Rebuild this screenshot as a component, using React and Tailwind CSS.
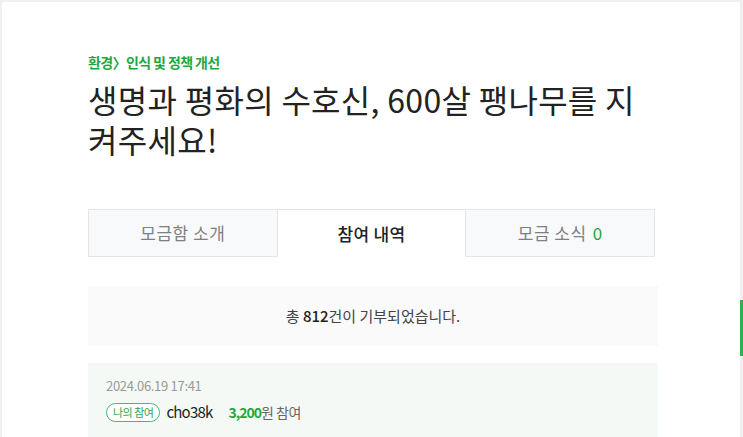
import React from 'react';

const font = { fontFamily: '"Noto Sans CJK KR", "Noto Sans", sans-serif' };

const tabs = [
  { label: '모금함 소개', active: false },
  { label: '참여 내역', active: true },
  { label: '모금 소식', active: false, count: 0 },
];

const App = () => {
  return (
    <div className="relative w-[743px] h-[437px] overflow-hidden bg-white" style={font}>
      <div className="absolute inset-0 border-l-[2px] border-t-[2px] border-r-[3px] border-[#f0f0f0] pointer-events-none" />
      {/* side indicator */}
      <div className="absolute right-0 top-[300px] w-[3px] h-[56px] bg-[#2bb24c]" />

      <div className="pl-[88px] pr-[88px] pt-[51px]">
        <p className="text-[14px] font-bold text-[#1fa83e] tracking-[-0.6px] leading-[22px]">
          환경〉인식 및 정책 개선
        </p>
        <h1 className="mt-[6px] text-[32px] leading-[40px] text-[#222] tracking-[0.3px]">
          생명과 평화의 수호신, 600살 팽나무를 지<br />켜주세요!
        </h1>

        <div className="mt-[50px] flex w-[567px] h-[48px]">
          {tabs.map((t, i) => (
            <div
              key={i}
              className={
                t.active
                  ? 'flex-1 flex items-center justify-center bg-white border-t border-[#e5e5e5] text-[17px] text-[#222] font-medium tracking-[0.3px]'
                  : 'flex-1 flex items-center justify-center bg-[#f8f9fa] border border-[#e5e5e5] text-[17px] text-[#808080] tracking-[0.5px]'
              }
            >
              {t.label}
              {t.count !== undefined && <span className="ml-[6px] text-[#1fa83e]">{t.count}</span>}
            </div>
          ))}
        </div>

        <div className="mt-[29px] w-[570px] h-[60px] bg-[#fafafa] flex items-center justify-center text-[15px] text-[#444] tracking-[0px]">
          총&nbsp;<span className="font-medium text-[#222]">812</span>건이 기부되었습니다.
        </div>

        <div className="mt-[17px] w-[570px] h-[90px] bg-[#f4f9f5] pl-[18px] pt-[14px]">
          <p className="text-[13px] text-[#999] tracking-[-0.3px] leading-[18px]">2024.06.19 17:41</p>
          <div className="mt-[6px] flex items-center">
            <span className="inline-flex items-center h-[19px] px-[6px] rounded-full border border-[#4cb868] text-[11px] text-[#2aa84a] bg-white tracking-[-0.5px] leading-none">
              나의 참여
            </span>
            <span className="ml-[6px] text-[15px] text-[#222] tracking-[-0.8px]">cho38k</span>
            <span className="ml-[16px] text-[14px] font-bold text-[#1fa83e] tracking-[-1px]">3,200</span>
            <span className="text-[14px] text-[#666] tracking-[-0.5px]">원 참여</span>
          </div>
        </div>
      </div>
    </div>
  );
};

export default App;
